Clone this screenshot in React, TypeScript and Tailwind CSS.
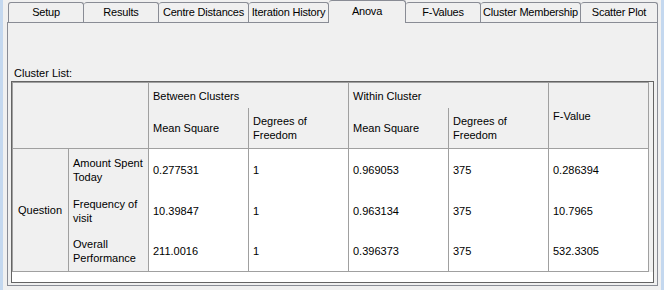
import React from "react";

const tabs = [
  { label: "Setup", w: "w-[76px]", first: true },
  { label: "Results", w: "w-[75px]" },
  { label: "Centre Distances", w: "w-[90px]" },
  { label: "Iteration History", w: "w-[80px]" },
  { label: "Anova", w: "w-[77px]", selected: true },
  { label: "F-Values", w: "w-[75px]" },
  { label: "Cluster Membership", w: "w-[100px]" },
  { label: "Scatter Plot", w: "w-[77px]" },
];

const rows = [
  { label: ["Amount Spent", "Today"], vals: ["0.277531", "1", "0.969053", "375", "0.286394"] },
  { label: ["Frequency of", "visit"], vals: ["10.39847", "1", "0.963134", "375", "10.7965"] },
  { label: ["Overall", "Performance"], vals: ["211.0016", "1", "0.396373", "375", "532.3305"] },
];

const cell = "flex items-center pl-[4px] leading-[14px] border-[#a0a0a0]";

export default function App() {
  return (
    <div
      className="flex w-[664px] h-[290px] bg-[#f0f0f0] overflow-hidden text-black text-[11px]"
      style={{ fontFamily: '"Liberation Sans", Arial, sans-serif' }}
    >
      <div className="w-[3px] shrink-0 bg-[#c4d8ef]" />
      <div className="w-[658px] shrink-0 flex flex-col">
        {/* tabs */}
        <div className="h-[22px] flex items-end pl-[5px]">
          {tabs.map((t) =>
            t.selected ? (
              <div
                key={t.label}
                className={`${t.w} h-[23px] -mb-px relative z-10 bg-[#f0f0f0] border-r border-t border-[#898c95] rounded-t-[3px] flex items-center justify-center pb-[1px] tracking-[-0.2px] text-[11px]`}
              >
                {t.label}
              </div>
            ) : (
              <div
                key={t.label}
                className={`${t.w} h-[20px] bg-[#f0f0f0] border-r border-t ${t.first ? "border-l" : ""} border-[#898c95] rounded-t-[3px] flex items-center justify-center tracking-[-0.2px] text-[11px] whitespace-nowrap`}
              >
                {t.label}
              </div>
            )
          )}
        </div>
        {/* panel */}
        <div className="ml-[4px] w-[651px] h-[264px] border border-[#898c95] pt-[44px] px-[3px] flex flex-col">
          <div className="h-[13px] leading-[13px] pl-[3px]">Cluster List:</div>
          <div className="mt-[1px] w-[643px] h-[202px] border border-[#646464] flex flex-col">
            <div className="w-[637px] grid grid-cols-[56px_80px_100px_100px_100px_100px_100px] grid-rows-[25px_41px_41px_41px_40px] border-t border-l border-b border-[#a0a0a0]">
              <div className={`${cell} col-span-2 row-span-2 border-r border-b bg-[#f0f0f0]`} />
              <div className={`${cell} col-span-2 border-r bg-[#f0f0f0]`}>Between Clusters</div>
              <div className={`${cell} col-span-2 border-r bg-[#f0f0f0]`}>Within Cluster</div>
              <div className={`${cell} row-span-2 border-r border-b bg-[#f0f0f0]`}>F-Value</div>
              <div className={`${cell} border-r border-b bg-[#f0f0f0]`}>Mean Square</div>
              <div className={`${cell} border-r border-b bg-[#f0f0f0]`}>
                Degrees of
                <br />
                Freedom
              </div>
              <div className={`${cell} border-r border-b bg-[#f0f0f0]`}>Mean Square</div>
              <div className={`${cell} border-r border-b bg-[#f0f0f0]`}>
                Degrees of
                <br />
                Freedom
              </div>
              <div className={`${cell} row-span-3 col-start-1 row-start-3 border-r bg-[#f0f0f0] pl-[5px]`}>Question</div>
              {rows.map((r) => (
                <React.Fragment key={r.label.join(" ")}>
                  <div className={`${cell} col-start-2 border-r bg-[#f0f0f0]`}>
                    {r.label[0]}
                    <br />
                    {r.label[1]}
                  </div>
                  {r.vals.map((v, i) => (
                    <div key={i} className={`${cell} border-r bg-white`}>
                      {v}
                    </div>
                  ))}
                </React.Fragment>
              ))}
            </div>
            <div className="h-[10px] w-full bg-white" />
          </div>
        </div>
      </div>
      <div className="w-[3px] shrink-0 bg-[#c4d8ef]" />
    </div>
  );
}
